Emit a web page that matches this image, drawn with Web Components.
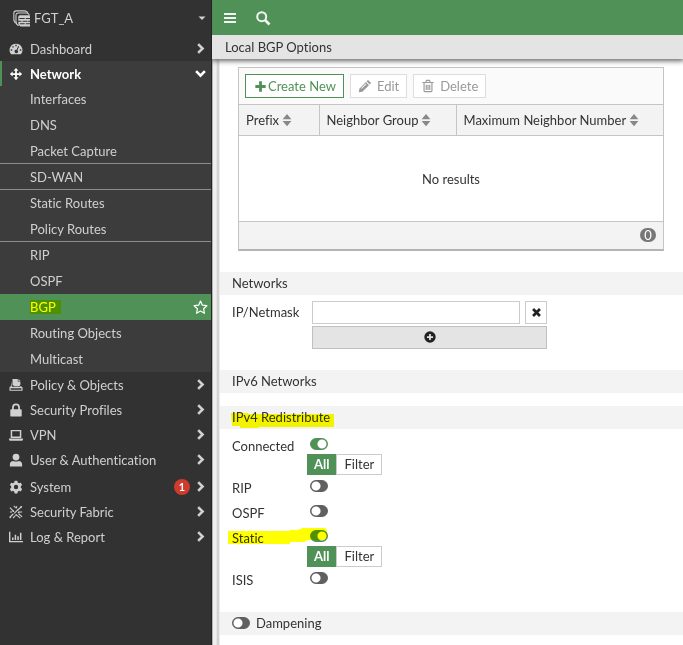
<!DOCTYPE html>
<html lang="en">
<head>
<meta charset="utf-8">
<title>FGT_A - BGP</title>
<style>
html,body{height:100%}
body{margin:0;font:13px/20px Lato,"Liberation Sans",sans-serif;font-variant-ligatures:none;color:#333;background:#fff;overflow:hidden;
--green:#509157;--line:#c4c4c4;--bar:#f3f3f3}
</style>
</head>
<body>
<app-shell>
  <side-nav slot="nav"></side-nav>
  <top-bar slot="top"></top-bar>
  <page-title slot="top">Local BGP Options</page-title>
  <neighbor-table></neighbor-table>
  <form-section heading="Networks"><netmask-field></netmask-field></form-section>
  <form-section heading="IPv6 Networks"></form-section>
  <form-section heading="IPv4 Redistribute" marked list>
    <redistribute-row name="Connected" on></redistribute-row>
    <redistribute-row name="RIP"></redistribute-row>
    <redistribute-row name="OSPF"></redistribute-row>
    <redistribute-row name="Static" on marked></redistribute-row>
    <redistribute-row name="ISIS"></redistribute-row>
  </form-section>
  <form-section heading="Dampening" toggle></form-section>
</app-shell>
<script>
const ICONS = {
  device:'<g fill="none" stroke="currentColor"><path d="M3.500 12.500C1.500 12 .8 11 .8 9V3C.8 1.500 1.500.8 3 .8h8c1.500 0 2.500.7 3 2.200"/><path d="M5.500 14.500C3.500 14 2.800 13 2.800 11V5C2.800 3.500 3.500 2.800 5 2.800h7.500c1.500 0 2.500.7 3 2.200"/></g><path fill="currentColor" fill-rule="evenodd" d="M6 5h9.500l.5 1v9.500H7L5 13.500V6zM6 7.500v1h5v-1zm6 0v1h4v-1zM5 10v1h3v-1zm4 0v1h4.500v-1zm5 0v1h2v-1zM6.500 12.500v1H11v-1zm5.500 0v1h4v-1z"/>',
  gauge:'<path fill="currentColor" fill-rule="evenodd" d="M8 2a7.300 7.300 0 0 1 6.200 11.200l-.7.8h-11l-.7-.8A7.300 7.300 0 0 1 8 2zM7.200 3.200v1.600h1.600V3.200zM3.800 4.800v1.600h1.600V4.800zM2 8.300v1.600h1.600V8.300zm10.400 0v1.600H14V8.300zM10.600 4.500 8.500 9A1.900 1.900 0 1 0 9.600 9.500L11.600 5z"/>',
  move:'<path fill="currentColor" d="M8 1l2.800 3.200H9V7h2.800V5.200L15 8l-3.200 2.800V9H9v2.800h1.800L8 15l-2.800-3.200H7V9H4.200v1.800L1 8l3.200-2.800V7H7V4.200H5.200z"/>',
  policy:'<path fill="currentColor" d="M4 1h6v3h3v3.500l-1 2H6.500L4 8z"/><path fill="currentColor" d="M10.800 1 13 3.300h-2.200z"/><path fill="currentColor" d="M3 4v6h9v1H2V9.500z"/><path fill="none" stroke="currentColor" stroke-width="1.300" d="M3 9.500 1.200 11v3h13.600v-3L13 9.500M2 11h12"/>',
  lock:'<path fill="none" stroke="currentColor" stroke-width="2" d="M4.500 8V5a3.500 3.500 0 0 1 7 0v3"/><rect x="1.500" y="7" width="13" height="8.500" rx="1" fill="currentColor"/>',
  laptop:'<path fill="none" stroke="currentColor" stroke-width="1.700" d="M2.800 3h10.400v7.500H2.800z"/><path fill="currentColor" d="M0 12h16v1.500q-.2 1-1.500 1h-13q-1.300 0-1.500-1z"/>',
  user:'<circle cx="8" cy="4.700" r="3.900" fill="currentColor"/><path fill="currentColor" d="M1 15.500V13c0-2.500 1.500-4 4-4 1.500.8 4.500.8 6 0 2.500 0 4 1.500 4 4v2.500z"/>',
  gear:'<path fill="currentColor" fill-rule="evenodd" d="M6.500.8h3l.5 2 1.500.9 2-.6 1.500 2.600-1.500 1.500v1.700l1.500 1.500-1.500 2.600-2-.6-1.500.9-.5 2h-3l-.5-2-1.500-.9-2 .6L1 10.400l1.500-1.500V7.200L1 5.700l1.500-2.600 2 .6L6 2.800zM8 5.500a2.500 2.500 0 1 0 0 5 2.500 2.500 0 0 0 0-5z"/>',
  fabric:'<g stroke="currentColor" stroke-width="1.300" fill="none"><path d="M1 3l4 4M5.500 1l2 2M9.500 6.500 14 2M1 14l4-4M4.500 15 7 12.500M6 9.500l5-5M8 11l5 4M11 8h4M11 10l4 3.500M1 8h2.500M9 1.500 8 4"/></g><g fill="currentColor"><circle cx="14" cy="2" r="1"/><circle cx="5" cy="7" r="1"/><circle cx="11" cy="8.500" r="1"/><circle cx="1.500" cy="14" r="1"/><circle cx="8" cy="11.500" r="1"/></g>',
  chart:'<path fill="currentColor" d="M0 2h1.600v10.500H16V14H0zM3.500 8.500h1.700v3H3.500zM6.500 5.500h1.700v6H6.500zM9.500 7h1.700v4.500H9.500zM12.500 3h1.700v8.500h-1.700z"/>',
  right:'<path fill="none" stroke="currentColor" stroke-width="2.800" d="M5.500 3.300 10.200 8l-4.700 4.700"/>',
  down:'<path fill="none" stroke="currentColor" stroke-width="2.800" d="M3.300 5.500 8 10.200l4.700-4.700"/>',
  caret:'<path fill="currentColor" d="M4.500 6.500h7L8 10z"/>',
  star:'<path fill="none" stroke="currentColor" stroke-width="1.300" stroke-linejoin="round" d="M8 1.200l2 4.300 4.800.6-3.500 3.200.9 4.900L8 11.800l-4.200 2.400.9-4.900L1.200 6.100 6 5.500z"/>',
  menu:'<path fill="currentColor" d="M2 3h12v2H2zM2 7h12v2H2zM2 11h12v2H2z"/>',
  search:'<circle cx="6.700" cy="6.700" r="4.500" fill="none" stroke="currentColor" stroke-width="2"/><path stroke="currentColor" stroke-width="2.600" d="M10 10l4.500 4.500"/>',
  plus:'<path fill="currentColor" d="M6.500 2.500h3v4h4v3h-4v4h-3v-4h-4v-3h4z"/>',
  pencil:'<path fill="currentColor" fill-rule="evenodd" d="M11.500 1 15 4.500 13.300 6.200 9.800 2.700zM9 3.500 12.500 7 5 14.500l-4 .5.500-4zM8.800 5.200 3.500 10.500l.7.700L9.500 5.900z"/>',
  trash:'<path fill="none" stroke="currentColor" stroke-width="1.300" d="M3.500 4.500v8.800q0 1.200 1.200 1.200h6.600q1.200 0 1.200-1.200V4.500M1.500 4h13M5.500 3.500l.8-2h3.400l.8 2M6 6.500v6M8 6.500v6M10 6.500v6"/>',
  sort:'<path fill="currentColor" d="M8 1 13 7H3zM3 9h10l-5 6z"/>',
  cross:'<path stroke="currentColor" stroke-width="4" d="M3 3l10 10M13 3 3 13"/>',
  add:'<path fill="currentColor" fill-rule="evenodd" d="M8 1.500a6.500 6.500 0 1 0 0 13 6.500 6.500 0 0 0 0-13zM7 4.500h2V7h2.500v2H9v2.500H7V9H4.500V7H7z"/>'
};
const define = (name, render) => customElements.define(name, class extends HTMLElement {
  connectedCallback(){
    if(this.shadowRoot) return;
    this.attachShadow({mode:'open'}).innerHTML = '<style>*{box-sizing:border-box}button,input{font:inherit;color:inherit;margin:0}</style>' + render(this);
  }
});
const icon = (n, cls='') => `<ui-icon name="${n}" class="${cls}"></ui-icon>`;

define('ui-icon', el => `<style>:host{display:block;flex:none;width:var(--size,16px);height:var(--size,16px)}svg{display:block;width:100%;height:100%}</style>
<svg viewBox="0 0 16 16" aria-hidden="true">${ICONS[el.getAttribute('name')]}</svg>`);

define('app-shell', () => `<style>
:host{display:grid;grid-template-columns:212px minmax(0,1fr);height:100vh}
main{display:flex;flex-direction:column;min-height:0;min-width:0}
.top{position:relative;z-index:1}
.gutter{flex:1;min-height:0;padding-left:8px;background:linear-gradient(to right,#777 0,#efefef 1px,#efefef 4px,#c9c9c9 6px,#f6f6f6 8px)}
.body{height:100%;background:#fff;overflow:hidden;padding-top:8px}
</style><slot name="nav"></slot><main><div class="top"><slot name="top"></slot></div><div class="gutter"><div class="body"><slot></slot></div></div></main>`);

define('nav-item', el => {
  const a = n => el.getAttribute(n), h = n => el.hasAttribute(n);
  const label = el.getAttribute('label');
  return `<style>
:host{display:block}
a{display:flex;align-items:center;height:25px;padding:0 3px 0 9px;color:#d0d0d0;text-decoration:none}
:host([sub]) a{height:26px;padding-left:30px}
:host([line]) a{border-bottom:1px solid #8c8c8c}
:host([open]) a{color:#fff;font-weight:700;border-left:2px solid var(--green);padding-left:7px}
:host([current]) a{background:var(--green);color:#fff}
.lead{margin-right:7px;--size:14px}
.text{flex:1}
.tail{--size:15px}
.badge{width:16px;height:16px;border-radius:8px;background:#cd3c2d;color:#fff;font:700 11px/16px Lato,sans-serif;text-align:center;margin-right:3px}
mark{background:#4e9100;color:#ff0;padding-right:5px;line-height:14px;display:inline-block}
</style><a href="#"${h('current')?' aria-current="page"':''}>${a('icon')?icon(a('icon'),'lead'):''}<span class="text">${h('current')?`<mark>${label}</mark>`:label}</span>${a('badge')?`<span class="badge">${a('badge')}</span>`:''}${h('current')?icon('star','tail'):h('sub')?'':icon(h('open')?'down':'right','tail')}</a>`;
});

define('side-nav', () => `<style>
:host{display:block;position:relative;z-index:2;background:#323232;color:#d0d0d0;border-right:1px solid #242424;overflow:hidden}
.device{display:flex;align-items:center;width:100%;height:36px;padding:0 1px 0 13px;border:0;background:none;color:#d0d0d0;text-align:left;gap:4px}
.device ui-icon:first-child{--size:17px}
.device span{flex:1}
.group{background:#3c3c3c}
.tail{--size:16px}
.section+.section{padding-top:2px}
</style>
<button class="device">${icon('device')}<span>FGT_A</span>${icon('caret','tail')}</button>
<nav>
<nav-item icon="gauge" label="Dashboard"></nav-item>
<div class="group">
<nav-item icon="move" label="Network" open></nav-item>
${['Interfaces','DNS','Packet Capture|','SD-WAN|','Static Routes','Policy Routes|','RIP','OSPF','BGP*','Routing Objects','Multicast'].map(t=>`<nav-item sub label="${t.replace(/[|*]/,'')}"${t.endsWith('|')?' line':''}${t.endsWith('*')?' current':''}></nav-item>`).join('')}
</div>
<div class="section">
<nav-item icon="policy" label="Policy &amp; Objects"></nav-item>
<nav-item icon="lock" label="Security Profiles"></nav-item>
<nav-item icon="laptop" label="VPN"></nav-item>
<nav-item icon="user" label="User &amp; Authentication"></nav-item>
</div>
<div class="section">
<nav-item icon="gear" label="System" badge="1"></nav-item>
<nav-item icon="fabric" label="Security Fabric"></nav-item>
<nav-item icon="chart" label="Log &amp; Report"></nav-item>
</div>
</nav>`);

define('top-bar', () => `<style>
:host{display:flex;position:relative;z-index:1;align-items:center;height:35px;background:var(--green);padding-left:10px;gap:17px}
button{border:0;background:none;padding:0;color:#f2f6f2}
</style><button aria-label="Menu">${icon('menu')}</button><button aria-label="Search">${icon('search')}</button>`);

define('page-title', () => `<style>
:host{display:block}
h1{margin:0;font:inherit;line-height:24px;padding-left:13px;background:#e4e4e4;box-shadow:0 1px 5px 1px #666}
</style><h1><slot></slot></h1>`);

define('neighbor-table', () => `<style>
:host{display:block;margin:0 19px 21px 18px;border:1px solid var(--line);border-bottom:2px solid #b4b4b4}
.tools{display:flex;gap:6px;padding:6px;background:#fafafa;height:36px}
.tools button{display:flex;align-items:center;gap:5px;height:24px;padding:0 7px;border:1px solid #ddd;background:#fff;color:#999;--size:14px}
.tools .new{border-color:var(--green);color:var(--green);gap:0;--size:15px}
table{width:100%;border-collapse:collapse;table-layout:fixed}
th{height:31px;padding:0 0 0 7px;background:#f3f3f3;border:solid var(--line);border-width:1px 0 1px 1px;font-weight:400;text-align:left}
th:first-child{border-left:0}
th div{display:flex;align-items:center;gap:1px}
th ui-icon{--size:14px;color:#888}
td{text-align:center;padding:0}
tbody td{height:86px}
tfoot td{height:27px;background:#f3f3f3;border-top:1px solid var(--line);padding-right:7px}
.count{display:block;margin-left:auto;width:16px;height:14px;border-radius:7px;background:#777;color:#fff;line-height:14px}
.c1{width:80px}.c2{width:137px}
</style>
<div class="tools"><button class="new">${icon('plus')}Create New</button><button disabled>${icon('pencil')}Edit</button><button disabled>${icon('trash')}Delete</button></div>
<table><colgroup><col class="c1"><col class="c2"><col></colgroup>
<thead><tr>${['Prefix','Neighbor Group','Maximum Neighbor Number'].map(t=>`<th scope="col"><div>${t}${icon('sort')}</div></th>`).join('')}</tr></thead>
<tbody><tr><td colspan="3">No results</td></tr></tbody>
<tfoot><tr><td colspan="3"><span class="count">0</span></td></tr></tfoot></table>`);

const switchStyle = `
.switch{appearance:none;display:block;flex:none;width:18px;height:12px;border:1px solid #606060;border-radius:6px;background:radial-gradient(circle at 5px 5px,#fff 4px,#606060 5px)}
.switch:checked{border-color:var(--green);background:radial-gradient(circle at 11px 5px,#fff 4px,var(--green) 5px)}`;

define('form-section', el => {
  const t = el.getAttribute('heading');
  return `<style>${switchStyle}
:host{display:block;margin-bottom:13px}
:host([list]) .content{padding:4px 0 7px}
h2{display:flex;align-items:center;margin:0;height:23px;padding-left:12px;font:inherit;background:var(--bar)}
.label{position:relative}
.label svg{position:absolute;left:-1px;top:6px;width:calc(100% + 5px);height:16px;mix-blend-mode:multiply}
label{display:flex;align-items:center;gap:6px}
</style><h2>${el.hasAttribute('toggle')?`<label><input class="switch" type="checkbox">${t}</label>`:
 `<span class="label">${t}${el.hasAttribute('marked')?'<svg viewBox="0 0 102 16" preserveAspectRatio="none" aria-hidden="true"><path fill="#ff0" d="M0 0h17v1h85v13H27v1H9v-2H1z"/></svg>':''}</span>`}</h2><div class="content"><slot></slot></div>`;
});

define('netmask-field', () => `<style>
:host{display:grid;grid-template-columns:75px 208px 22px;gap:2px 5px;padding:6px 0 8px 12px}
label{line-height:23px}
input{height:23px;border:1px solid #ccc;background:#fff;padding:0 6px;min-width:0;width:100%}
button{display:flex;align-items:center;justify-content:center;height:23px;padding:0;border:1px solid #ccc;background:#fff;color:#222;--size:14px}
.add{grid-column:2/4;background:#e4e4e4;border-color:#c0c0c0}
.del{--size:11px}
</style><label for="ip">IP/Netmask</label><input id="ip" type="text"><button class="del" aria-label="Remove">${icon('cross')}</button><button class="add" aria-label="Add">${icon('add')}</button>`);

define('redistribute-row', el => {
  const n = el.getAttribute('name'), on = el.hasAttribute('on');
  return `<style>${switchStyle}
:host{display:block;position:relative;padding-left:12px}
.row{display:flex;align-items:flex-start;height:25px}
:host([on]) .row{height:21px}
.row label{width:78px;line-height:26px}
.row .switch{margin-top:5px}
fieldset{display:flex;margin:0 0 0 75px;padding:0;border:0}
fieldset input{position:absolute;opacity:0;width:1px;height:1px}
fieldset label{height:21px;line-height:19px;padding:0 7px;border:1px solid #ccc;background:#fff}
fieldset label:first-of-type{padding:0 6px}
fieldset input:checked+label{background:var(--green);border-color:var(--green);color:#fff;font-weight:700}
.ink{position:absolute;left:8px;top:2px;width:101px;height:18px;mix-blend-mode:multiply}
</style><div class="row"><label for="t">${n}</label><input id="t" class="switch" type="checkbox"${on?' checked':''}></div>
${on?`<fieldset aria-label="${n} scope"><input type="radio" name="s" id="a" checked><label for="a">All</label><input type="radio" name="s" id="f"><label for="f">Filter</label></fieldset>`:''}
${el.hasAttribute('marked')?'<svg class="ink" viewBox="0 0 101 18" aria-hidden="true"><path fill="#ff0" d="M0 4h59l4-1h6l6-2h22l2 2v8l-3 2H80l-4 2H62v2H11v1l-2-1H0z"/></svg>':''}`;
});
</script>
</body>
</html>
